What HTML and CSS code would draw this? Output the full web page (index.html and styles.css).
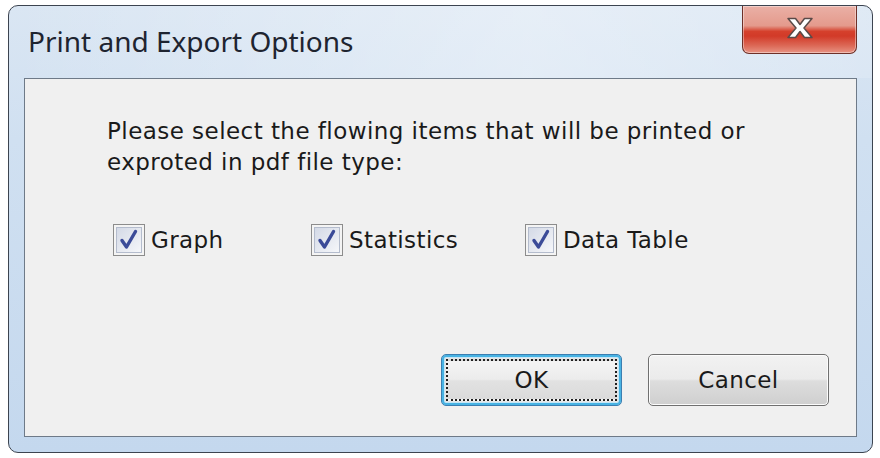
FILE: index.html
```html
<!DOCTYPE html>
<html>
<head>
<meta charset="utf-8">
<link rel="stylesheet" href="styles.css">
</head>
<body>
<div class="window">
  <div class="titlebar">
    <div class="title">Print and Export Options</div>
    <div class="close">
      <svg width="28" height="22" viewBox="0 0 28 22">
        <path d="M2 1.5 H9.5 L14 7.5 L18.5 1.5 H26 L18 11 L26 20.5 H18.5 L14 14.5 L9.5 20.5 H2 L10 11 Z" fill="#ffffff" stroke="#5a4a48" stroke-width="1.5" stroke-linejoin="round"/>
      </svg>
    </div>
  </div>
  <div class="content">
    <p class="message">Please select the flowing items that will be printed or<br>exproted in pdf file type:</p>
    <div class="options">
      <label class="option opt-graph"><span class="box"><svg width="32" height="32" viewBox="0 0 32 32"><defs><linearGradient id="g1" x1="0" y1="0" x2="1" y2="1"><stop offset="0" stop-color="#d3d9e6"/><stop offset="1" stop-color="#f6f7fa"/></linearGradient></defs><rect x="0.5" y="0.5" width="31" height="31" fill="#f4f4f4" stroke="#8c8c8c"/><rect x="3.5" y="3.5" width="25" height="25" fill="url(#g1)" stroke="#b4bccd"/><path d="M9 16.5 L13.5 23 L22.5 7.5" fill="none" stroke="#3b4b98" stroke-width="3.4" stroke-linecap="round" stroke-linejoin="round"/></svg></span>Graph</label>
      <label class="option opt-stats"><span class="box"><svg width="32" height="32" viewBox="0 0 32 32"><rect x="0.5" y="0.5" width="31" height="31" fill="#f4f4f4" stroke="#8c8c8c"/><rect x="3.5" y="3.5" width="25" height="25" fill="url(#g1)" stroke="#b4bccd"/><path d="M9 16.5 L13.5 23 L22.5 7.5" fill="none" stroke="#3b4b98" stroke-width="3.4" stroke-linecap="round" stroke-linejoin="round"/></svg></span>Statistics</label>
      <label class="option opt-table"><span class="box"><svg width="32" height="32" viewBox="0 0 32 32"><rect x="0.5" y="0.5" width="31" height="31" fill="#f4f4f4" stroke="#8c8c8c"/><rect x="3.5" y="3.5" width="25" height="25" fill="url(#g1)" stroke="#b4bccd"/><path d="M9 16.5 L13.5 23 L22.5 7.5" fill="none" stroke="#3b4b98" stroke-width="3.4" stroke-linecap="round" stroke-linejoin="round"/></svg></span>Data Table</label>
    </div>
    <div class="buttons">
      <button class="btn btn-default"><span class="focus">OK</span></button>
      <button class="btn">Cancel</button>
    </div>
  </div>
</div>
</body>
</html>
```
FILE: styles.css
```css
html, body {
  margin: 0;
  padding: 0;
  background: #ffffff;
}
body {
  padding: 5px 0 0 8px;
}
.window {
  width: 863px;
  height: 446px;
  border: 1px solid #3c4450;
  border-radius: 10px;
  background: linear-gradient(180deg, #dae6f3 0%, #d0e0f1 30%, #c4d8ee 100%);
  display: flex;
  flex-direction: column;
}
.titlebar {
  height: 72px;
  display: flex;
  justify-content: space-between;
  align-items: flex-start;
  padding: 0 15px 0 19px;
  background: linear-gradient(90deg, rgba(255,255,255,0.0) 0%, rgba(255,255,255,0.35) 60%, rgba(255,255,255,0.15) 100%);
  border-radius: 10px 10px 0 0;
}
.title {
  font-family: "Noto Sans", "Open Sans", sans-serif;
  font-size: 28px;
  color: #1e2430;
  margin-top: 17px;
  line-height: 36px;
}
.close {
  width: 115px;
  height: 48px;
  box-sizing: border-box;
  border: 1px solid #6e3028;
  border-top: none;
  border-radius: 0 0 7px 7px;
  background: linear-gradient(180deg, #eab0a6 0%, #e49a8c 42%, #d5402c 54%, #d23a28 64%, #dc6a58 85%, #e89484 100%);
  display: flex;
  align-items: center;
  justify-content: center;
  box-shadow: inset 0 0 0 1px rgba(255,255,255,0.4);
}
.close svg {
  margin-top: -4px;
}
.content {
  flex: 1;
  margin: 0 15px 15px 15px;
  border: 1px solid #6e7a88;
  background: #f0f0f0;
  display: flex;
  flex-direction: column;
  padding: 37px 27px 0 82px;
}
.message {
  margin: 0;
  font-family: "DejaVu Sans", sans-serif;
  font-size: 23px;
  letter-spacing: 0.45px;
  line-height: 31px;
  color: #1a1a1a;
}
.options {
  display: flex;
  align-items: center;
  margin-top: 46px;
  padding-left: 6px;
  font-family: "DejaVu Sans", sans-serif;
  font-size: 23px;
  letter-spacing: 0.4px;
  color: #1a1a1a;
}
.option {
  display: flex;
  align-items: center;
  gap: 6px;
}
.box {
  width: 32px;
  height: 32px;
  display: block;
}
.box svg {
  display: block;
}
.opt-graph { width: 198px; }
.opt-stats { width: 214px; }
.buttons {
  display: flex;
  justify-content: flex-end;
  gap: 26px;
  margin-top: 98px;
}
.btn {
  width: 181px;
  height: 52px;
  box-sizing: border-box;
  border: 1px solid #707070;
  border-radius: 5px;
  background: linear-gradient(180deg, #f2f2f2 0%, #ebebeb 48%, #dddddd 52%, #cfcfcf 100%);
  font-family: "DejaVu Sans", sans-serif;
  font-size: 23px;
  letter-spacing: 0.4px;
  color: #1a1a1a;
  padding: 0;
  box-shadow: inset 0 0 0 1px #fcfcfc;
}
.btn-default {
  border: 1px solid #3c7fb1;
  box-shadow: inset 0 0 0 2px #48b3e3, inset 0 0 0 3px #c6e6f6;
  background: #e6e6e6;
  display: flex;
  align-items: stretch;
  padding: 4px;
}
.focus {
  flex: 1;
  border: 2px dotted #202020;
  display: flex;
  align-items: center;
  justify-content: center;
  background: linear-gradient(180deg, #f4f4f4 0%, #ececec 48%, #e2e2e2 52%, #dadada 100%);
}
```
